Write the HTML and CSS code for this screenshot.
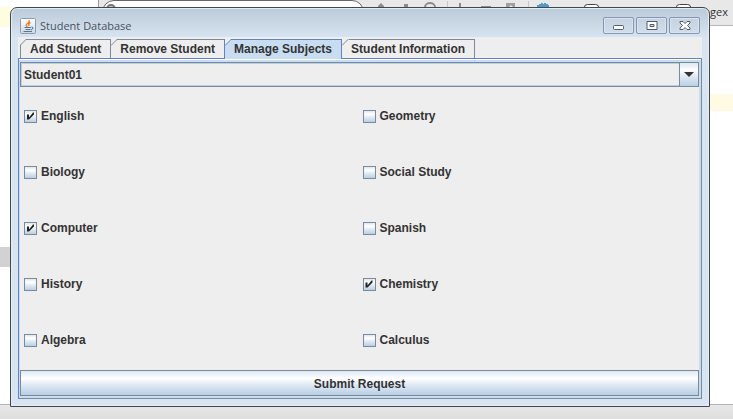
FILE: index.html
```html
<!DOCTYPE html>
<html lang="en">
<head>
<meta charset="utf-8">
<title>Student Database</title>
<link rel="stylesheet" href="styles.css">
</head>
<body>
<div class="backdrop">
  <div class="toolbar">
    <div class="search"><svg width="12" height="8" viewBox="0 0 12 8"><path d="M2 8a4 4 0 0 1 8 0" fill="#ccc" stroke="#777" stroke-width="2"/></svg></div>
    <svg class="tools" width="240" height="7" viewBox="0 0 240 7">
      <g fill="#8c8c8c">
        <path d="M14 7v-1l3-3 3 3v1zM40 4h4v3h-4z"/>
        <path d="M95 3h2v4h-2zM117 6h10v1h-10z"/>
        <path d="M142 3h9v4h-2l-2-2-2 2h-3z" fill="#a0a0a0"/>
      </g>
      <path d="M61 7a5 4 0 0 1 10 0" fill="none" stroke="#8c8c8c" stroke-width="2"/>
      <path d="M83.500 1v6M164.500 1v6" stroke="#c8c8c8"/>
      <path d="M173 7V5h2V4h2V3h2v1h1V3h2v1h2v1h1v2z" fill="#4f9ccc"/>
    </svg>
    <svg class="tools ticks" width="108" height="7" viewBox="0 0 108 7">
      <path d="M.5 7q0-2.500 3-2.500h8q3 0 3 2.500M92.500 7q0-2.500 3-2.500h8q3 0 3 2.500" fill="#fff" stroke="#444"/>
    </svg>
    <span class="option"><u>g</u>ex</span>
  </div>
  <div class="mark mark-left"></div>
  <div class="mark mark-thumb"></div>
  <div class="mark mark-right"></div>
  <div class="status"></div>
</div>

<main class="window">
  <header class="titlebar">
    <svg class="java" width="16" height="16" viewBox="0 0 16 16">
      <defs><linearGradient id="tile" x2="0" y2="1"><stop stop-color="#fff"/><stop offset="1" stop-color="#c9d7e4"/></linearGradient></defs>
      <rect x=".5" y=".5" width="15" height="15" rx="1" fill="url(#tile)" stroke="#8c9cad"/>
      <path d="M9 2q1 2-1.500 3.500T7.500 9M10.500 4.500Q8 6 9 8" fill="none" stroke="#f08020" stroke-width="1.300"/>
      <path d="M4.500 9.500h6.500M5.500 11.500h5M3.500 13.500h8.500M11.500 9q2.500 0 1 2l-1.500 1" fill="none" stroke="#527791"/>
    </svg>
    <h1>Student Database</h1>
    <div class="controls">
      <button type="button" aria-label="Minimize"><svg width="12" height="10" viewBox="0 0 12 10"><rect x=".5" y="4.500" width="10" height="4" rx="1" fill="#fff" stroke="#555b68"/></svg></button>
      <button type="button" aria-label="Maximize"><svg width="12" height="10" viewBox="0 0 12 10"><path d="M1 .5h10v8H1z" fill="#fff" stroke="#555b68"/><path d="M4 3.500h4v2H4z" fill="#cbd8e7" stroke="#555b68"/></svg></button>
      <button type="button" aria-label="Close"><svg width="12" height="10" viewBox="0 0 12 10"><path d="M1 .5h3l2 2 2-2h3v1.500L8.500 4.500 11 7v1.500H8l-2-2-2 2H1V7l2.500-2.500L1 2z" fill="#fff" stroke="#555b68"/></svg></button>
    </div>
  </header>

  <div class="content">
    <nav class="tabs" role="tablist">
      <button class="tab first" type="button" role="tab"><svg class="corner" width="7" height="7"><path d="M0 6.500L6.500 0"/></svg>Add Student</button>
      <button class="tab before" type="button" role="tab"><svg class="corner" width="7" height="7"><path d="M0 6.500L6.500 0"/></svg>Remove Student</button>
      <button class="tab selected" type="button" role="tab" aria-selected="true"><svg class="corner" width="7" height="7"><path d="M0 6.500L6.500 0"/></svg>Manage Subjects</button>
      <button class="tab" type="button" role="tab"><svg class="corner" width="7" height="7"><path d="M0 6.500L6.500 0"/></svg>Student Information</button>
    </nav>
    <section class="pane">
      <div class="combo">
        <select aria-label="Student"><option>Student01</option></select>
        <span class="arrow"><svg width="10" height="5" viewBox="0 0 10 5"><path d="M0 0h10L5 5z" fill="#333"/></svg></span>
      </div>
      <form class="subjects" id="subjects">
        <label><input type="checkbox" checked>English</label>
        <label><input type="checkbox">Geometry</label>
        <label><input type="checkbox">Biology</label>
        <label><input type="checkbox">Social Study</label>
        <label><input type="checkbox" checked>Computer</label>
        <label><input type="checkbox">Spanish</label>
        <label><input type="checkbox">History</label>
        <label><input type="checkbox" checked>Chemistry</label>
        <label><input type="checkbox">Algebra</label>
        <label><input type="checkbox">Calculus</label>
      </form>
      <button class="submit" type="button">Submit Request</button>
    </section>
  </div>
</main>
</body>
</html>
```
FILE: styles.css
```css
* { box-sizing: border-box; }

:root {
  --line: #7a8a99;
  --accent: #6382bf;
  --metal: linear-gradient(#dde8f3, #fff 30%, #dde8f3 60%, #b8cfe5);
}

body {
  margin: 0;
  height: 100vh;
  position: relative;
  overflow: hidden;
  background: #fff;
  color: #333;
  font: bold 12px/16px "Liberation Sans", Arial, sans-serif;
}

button, select { font: inherit; color: inherit; }

/* Application behind the window */
.backdrop { position: absolute; inset: 0; }
.toolbar {
  position: relative;
  height: 26px;
  margin-left: 98px;
  background: #e8e8e8;
  border-left: 1px solid #999;
  border-bottom: 1px solid #b8b8b8;
}
.search {
  position: absolute;
  left: 3px;
  top: 0;
  width: 262px;
  height: 24px;
  border: 1px solid #666;
  border-radius: 12px;
  background: #fff;
}
.search svg { display: block; margin-left: 2px; }
.tools { position: absolute; left: 265px; top: 0; }
.ticks { left: 485px; }
.option {
  position: absolute;
  right: 5px;
  top: 4px;
  font: 11px/16px "Open Sans", sans-serif;
}
.mark { position: absolute; }
.mark-left { left: 0; top: 7px; width: 12px; height: 20px; background: #fffde0; }
.mark-thumb { left: 0; top: 247px; width: 12px; height: 20px; background: #d2d2d2; }
.mark-right { right: 0; top: 94px; width: 26px; height: 17px; background: #fffae3; }
.status {
  position: absolute;
  inset: auto 0 0;
  height: 15px;
  border-top: 1px solid #b4b4b4;
  background: linear-gradient(#e8e8e8, #dedede);
}

/* Window frame */
.window {
  position: absolute;
  inset: 7px 23px 12px 10px;
  display: flex;
  flex-direction: column;
  padding: 0 7px 7px;
  border: 1px solid #46464a;
  border-radius: 7px 7px 0 0;
  background: linear-gradient(#bccbd9, #d7e4f2 30px);
  box-shadow: inset 0 0 0 1px #e4edf6;
}
.titlebar {
  display: flex;
  align-items: center;
  gap: 4px;
  height: 29px;
  padding: 0 2px;
}
.java { margin-top: 6px; }
h1 {
  flex: 1;
  margin: 7px 0 0;
  color: #4a525c;
  font: 11px/16px "Open Sans", sans-serif;
}
.controls { display: flex; gap: 2px; margin-top: 6px; }
.controls button {
  display: flex;
  align-items: center;
  justify-content: center;
  width: 31px;
  height: 17px;
  padding: 0;
  border: 1px solid #8595b3;
  border-radius: 2px;
  background: linear-gradient(#c5d3e1, #d0deec);
  box-shadow: inset 0 0 0 1px #dae5f1;
}

/* Tabs */
.content {
  flex: 1;
  display: flex;
  flex-direction: column;
  padding-top: 2px;
  background: #eee;
}
.tabs { display: flex; padding-left: 2px; }
.tab {
  position: relative;
  height: 19px;
  padding: 0 9px;
  border: 1px solid var(--line);
  border-width: 1px 1px 0 0;
  background: #eee;
  line-height: 18px;
}
.tab.first { border-left-width: 1px; }
.tab.before { border-right-color: var(--accent); }
.tab.selected {
  height: 20px;
  margin-bottom: -1px;
  padding-bottom: 1px;
  border-color: var(--accent);
  background: #c8ddf2;
  z-index: 1;
}
.corner {
  position: absolute;
  left: 0;
  top: -1px;
  background: linear-gradient(135deg, #eee 50%, transparent 50%);
  fill: none;
  stroke: var(--line);
}
.first .corner { left: -1px; }
.selected .corner { stroke: var(--accent); }

/* Tab page */
.pane {
  flex: 1;
  display: flex;
  flex-direction: column;
  padding: 3px 2px 2px 1px;
  border: 1px solid var(--line);
  border-top-color: var(--accent);
  border-left-color: var(--accent);
  background: #c8ddf2;
  box-shadow: inset 0 1px #fff;
}
.combo {
  display: flex;
  height: 25px;
  border: 1px solid var(--line);
  background: #eee;
  position: relative;
}
.combo select {
  flex: 1;
  appearance: none;
  padding: 0 22px 0 2px;
  border: 1px solid #b8cfe5;
  border-radius: 0;
  background: #eee;
}
.arrow {
  position: absolute;
  inset: 0 0 0 auto;
  width: 19px;
  display: flex;
  align-items: center;
  justify-content: center;
  border-left: 1px solid var(--line);
  background: var(--metal);
  pointer-events: none;
}
.subjects {
  flex: 1;
  display: grid;
  grid-template-columns: 1fr 1fr;
  grid-auto-rows: 1fr;
  padding: 1px 2px 2px 0;
  background: #eee;
}
.subjects label {
  display: flex;
  align-items: center;
  gap: 4px;
  padding-left: 4px;
}
.subjects input {
  appearance: none;
  width: 13px;
  height: 13px;
  margin: 0;
  border: 1px solid var(--line);
  background: var(--metal);
}
.subjects input:checked::before {
  content: "";
  display: block;
  width: 11px;
  height: 11px;
  background: #222;
  clip-path: polygon(2px 4px, 4px 4px, 4px 7px, 8px 2px, 9px 2px, 9px 4px, 4px 9px, 2px 9px);
}
.submit {
  height: 26px;
  padding: 1px 0 0;
  border: 1px solid var(--line);
  background: var(--metal);
}
```
